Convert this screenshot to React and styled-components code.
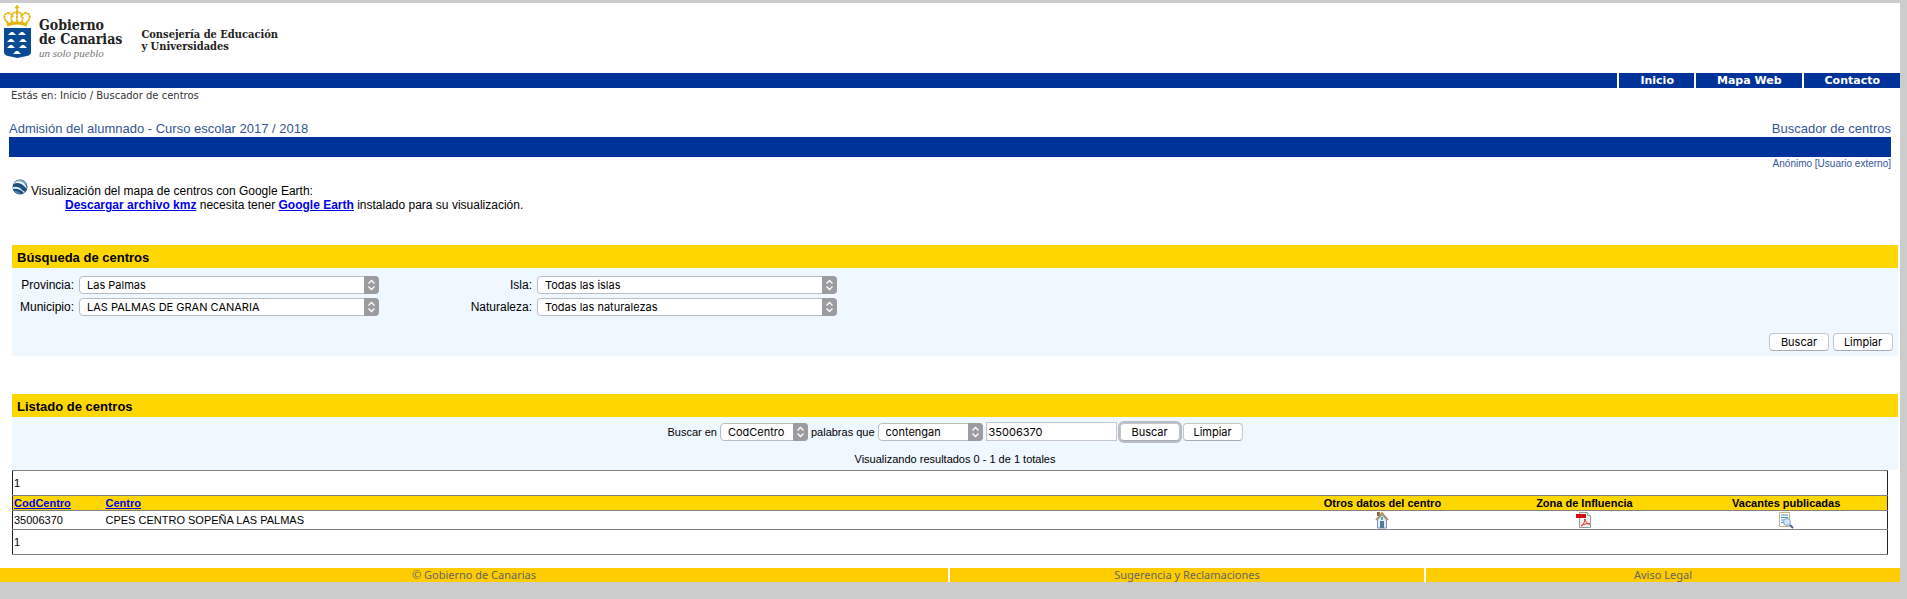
import React from 'react';
import styled, { createGlobalStyle, css } from 'styled-components';

const GlobalStyle = createGlobalStyle`
  * { box-sizing: border-box; }
  body {
    margin: 0;
    background: #cccccc;
    color: #000;
    font-family: "Liberation Sans", Arial, sans-serif;
    font-size: 12px;
    line-height: 14px;
  }
`;

const verdana = '"DejaVu Sans", Verdana, sans-serif';
const system = 'Inter, "Liberation Sans", sans-serif';

const Page = styled.div`
  margin: 3px 7px 0 0;
  background: #fff;
`;

const Masthead = styled.header`
  display: flex;
  height: 70px;
  padding: 2px 0 0 3px;
`;

const LogoLink = styled.a`
  display: flex;
  gap: 7px;
  height: 54px;
  color: #222;
  text-decoration: none;
`;

const LogoText = styled.span`
  display: flex;
  flex-direction: column;
  padding-top: 13px;
  font: bold 14px/14px "DejaVu Serif Condensed", "DejaVu Serif", serif;
`;

const Motto = styled.em`
  font: italic 11px/14px "Liberation Serif", serif;
  color: #777;
`;

const Department = styled.p`
  margin: 24px 0 0 19px;
  color: #222;
  font: bold 11px/12px "DejaVu Serif Condensed", "DejaVu Serif", serif;
`;

const TopNav = styled.nav`
  display: flex;
  justify-content: flex-end;
  height: 15px;
  background: #003399;
`;

const NavLink = styled.a`
  padding: 0 20px 0 21px;
  border-left: 2px solid #fff;
  color: #fff;
  font: bold 11px/16px ${verdana};
  text-decoration: none;
`;

const Breadcrumb = styled.nav`
  padding: 0 11px;
  color: #333;
  font: 10px/16px ${verdana};
`;

const CrumbLink = styled.a`
  color: inherit;
  text-decoration: none;
`;

const TitleBlock = styled.section`
  margin: 15px 9px 0;
  color: #335599;
`;

const TitleRow = styled.div`
  display: flex;
  justify-content: space-between;
`;

const Title = styled.h1`
  margin: 0;
  font-size: 13px;
  font-weight: normal;
  line-height: 16px;
  padding-top: 2px;
`;

const Subtitle = styled(Title).attrs({ as: 'h2' })``;

const BlueBar = styled.div`
  height: 20px;
  background: #003399;
`;

const UserInfo = styled.p`
  margin: 0;
  font-size: 10px;
  line-height: 13px;
  text-align: right;
`;

const EarthNote = styled.section`
  display: flex;
  gap: 3px;
  margin: 9px 12px 0;
`;

const EarthText = styled.p`
  margin: 5px 0 0;
`;

const EarthDetail = styled.span`
  display: block;
  padding-left: 34px;
`;

const BoldLink = styled.a`
  color: #0000ee;
  font-weight: bold;
`;

const Panel = styled.section`
  margin: ${p => p.$top}px 2px 0 12px;
  background: #eff7ff;
`;

const PanelTitle = styled.h2`
  margin: 0;
  padding: 1px 5px 0;
  background: #ffd700;
  font-size: 13px;
  line-height: 23px;
  height: 23px;
`;

const Filters = styled.div`
  display: grid;
  grid-template-columns: 62px 300px 148px 300px;
  column-gap: 5px;
  row-gap: 4px;
  padding-top: 8px;
`;

const FilterLabel = styled.label`
  text-align: right;
  line-height: 18px;
`;

const SelectWrap = styled.span`
  position: relative;
  display: inline-flex;
  width: ${p => p.$width || 'auto'};
  height: 18px;
`;

const NativeSelect = styled.select`
  appearance: none;
  width: 100%;
  height: 18px;
  padding: 0 20px 0 7px;
  border: 1px solid #b9bdc3;
  border-radius: 4px;
  background: #fff;
  color: #000;
  font: 11px/16px ${system};
`;

const Stepper = styled.svg`
  position: absolute;
  right: 0;
  top: 0;
  pointer-events: none;
`;

const Buttons = styled.div`
  display: flex;
  justify-content: flex-end;
  gap: 4px;
  padding: 17px 5px 5px;
`;

const Button = styled.button`
  width: 60px;
  height: 18px;
  padding: 0;
  border: 1px solid #c3c7cc;
  border-bottom-color: #a9adb3;
  border-radius: 4px;
  background: #fff;
  color: #000;
  font: 11px/16px ${system};
  ${p => p.$focused && css`box-shadow: 0 0 0 2px #b9bec6;`}
`;

const ListSearch = styled.form`
  display: flex;
  justify-content: center;
  align-items: center;
  gap: 3px;
  padding-top: 5px;
  font-size: 11px;
`;

const SearchInput = styled.input`
  width: 131px;
  height: 19px;
  padding: 0 2px;
  border: 1px solid #c6c6c6;
  border-radius: 0;
  background: #fff;
  color: #000;
  font: 11px/16px ${system};
`;

const ResultCount = styled.p`
  margin: 0;
  padding: 11px 0 4px;
  font-size: 11px;
  line-height: 14px;
  text-align: center;
`;

const TableWrap = styled.div`
  padding: 0 12px;
`;

const Results = styled.table`
  width: 100%;
  table-layout: fixed;
  border: 1px solid #222;
  border-top-color: #808080;
  border-bottom-color: #808080;
  border-collapse: collapse;
  font-size: 11px;
  line-height: 14px;
`;

const Row = styled.tr`
  height: ${p => p.$height}px;
  border-top: 1px solid #808080;
  ${p => p.$head && css`background: #ffd700;`}
`;

const Cell = styled.td`
  padding: 0 1px;
  text-align: ${p => p.$align || 'left'};
  svg { display: block; margin: 0 auto; }
`;

const IconLink = styled.a`
  display: block;
`;

const Footer = styled.footer`
  display: grid;
  grid-template-columns: 2fr 1fr 1fr;
  column-gap: 2px;
  margin-top: 13px;
`;

const FooterLink = styled.a`
  height: 14px;
  background: #ffcc00;
  color: #666;
  font: 11px/14px "Noto Sans", sans-serif;
  text-align: center;
  text-decoration: none;
`;

const islands = [[9, 26], [19, 26], [8, 33], [20, 33], [8, 39], [20, 39], [14, 45]];

const Shield = () => (
  <svg width="29" height="54" viewBox="0 0 29 54" aria-hidden="true">
    <g fill="none" stroke="#e3b300">
      <path d="M14 0v6M12 2.500h4" strokeWidth="1.500" />
      <path
        d="M5 18C0 14 0 9 5 8q4 0 5 4M23 18c5-4 5-9 0-10q-4 0-5 4M9 17c-2-7 1-10 5-10s7 3 5 10M14 8v9"
        strokeWidth="1.800"
        strokeDasharray="2.500 .600"
      />
      <path d="M4 20q10-4 20 0" strokeWidth="3" />
    </g>
    <path d="M1 23h27v24q0 3-4 4-5 1-9.500 2-4.500-1-9.500-2-4-1-4-4z" fill="#0a4c93" />
    <g fill="#fff">
      {islands.map(([x, y]) => (
        <path key={`${x}-${y}`} d={`M${x - 4} ${y + 4}l2-2 1-1h2l1 1 2 2z`} />
      ))}
    </g>
  </svg>
);

const Globe = () => (
  <svg width="16" height="16" viewBox="0 0 16 16" aria-hidden="true">
    <circle cx="8" cy="8" r="7.500" fill="#1d4f7e" />
    <path d="M2 4Q5 0 9 1q5 1 6 6Q10 1 2 4z" fill="#7fa9c9" />
    <path d="M1 5q7-3 11 2 2 2 3 3-1-5-5-7Q6 1 2 4z" fill="#f4f9fd" />
    <path d="M1 8q6-1 9 3l3 2-1 1Q7 9 1 10z" fill="#dcebf6" />
    <path d="M2 12q3-1 7 3-5 0-7-3z" fill="#4f86b4" />
  </svg>
);

const House = () => (
  <svg width="14" height="18" viewBox="0 0 14 18" aria-hidden="true">
    <path d="M2.500 9L7 4l4.500 5v8h-9z" fill="#e4effc" stroke="#7890b8" />
    <path d="M2 1h3v4H2z" fill="#9c6848" />
    <path d="M1 9l6-7 6 7" fill="none" stroke="#a88a5a" strokeWidth="1.500" />
    <path d="M5 10h4v7H5z" fill="#5877a8" />
    <path d="M7 6v3M7 11v5" stroke="#4c8c5c" strokeWidth="1.500" />
  </svg>
);

const Pdf = () => (
  <svg width="16" height="18" viewBox="0 0 16 18" aria-hidden="true">
    <path d="M3.500 1.500h8l3 3v12h-11z" fill="#f2f2f2" stroke="#999" />
    <path d="M11.500 1.500v3h3" fill="#fff" stroke="#aaa" />
    <path d="M0 3h10v4H0z" fill="#d40d12" />
    <path d="M5 15c2-1 4-4 4-7 1 4 3 5 5 5-3-1-6 0-9 2z" fill="none" stroke="#e0262b" />
  </svg>
);

const DocumentSearch = () => (
  <svg width="16" height="18" viewBox="0 0 16 18" aria-hidden="true">
    <path d="M1.500 1.500h10v14h-10z" fill="#fff" stroke="#c5b583" />
    <path d="M3 4h7M3 6.500h7M3 9h4M3 11.500h3" stroke="#4c94c8" />
    <circle cx="9" cy="11" r="3.500" fill="#cfe8fa" stroke="#7fa6cc" />
    <path d="M12 14l3 3" stroke="#4968a0" strokeWidth="2" />
  </svg>
);

function Select({ id, width, children }) {
  return (
    <SelectWrap $width={width}>
      <NativeSelect id={id}>
        <option>{children}</option>
      </NativeSelect>
      <Stepper width="15" height="18" viewBox="0 0 15 18" aria-hidden="true">
        <path d="M0 0h11q4 0 4 4v10q0 4-4 4H0z" fill="#9c9ba0" />
        <path d="M4.500 7.500l3-3 3 3M4.500 10.500l3 3 3-3" fill="none" stroke="#fff" strokeWidth="1.300" />
      </Stepper>
    </SelectWrap>
  );
}

const filters = [
  ['provincia', 'Provincia:', 'Las Palmas'],
  ['isla', 'Isla:', 'Todas las islas'],
  ['municipio', 'Municipio:', 'LAS PALMAS DE GRAN CANARIA'],
  ['naturaleza', 'Naturaleza:', 'Todas las naturalezas'],
];

export default function App() {
  return (
    <Page>
      <GlobalStyle />
      <Masthead>
        <LogoLink href="#">
          <Shield />
          <LogoText>
            <span>Gobierno</span>
            <span>de Canarias</span>
            <Motto>un solo pueblo</Motto>
          </LogoText>
        </LogoLink>
        <Department>Consejería de Educación<br />y Universidades</Department>
      </Masthead>
      <TopNav>
        <NavLink href="#">Inicio</NavLink>
        <NavLink href="#">Mapa Web</NavLink>
        <NavLink href="#">Contacto</NavLink>
      </TopNav>
      <Breadcrumb>
        Estás en: <CrumbLink href="#">Inicio</CrumbLink> / <CrumbLink href="#">Buscador de centros</CrumbLink>
      </Breadcrumb>

      <TitleBlock>
        <TitleRow>
          <Title>Admisión del alumnado - Curso escolar 2017 / 2018</Title>
          <Subtitle>Buscador de centros</Subtitle>
        </TitleRow>
        <BlueBar />
        <UserInfo>Anónimo [Usuario externo]</UserInfo>
      </TitleBlock>

      <EarthNote>
        <Globe />
        <EarthText>
          Visualización del mapa de centros con Google Earth:
          <EarthDetail>
            <BoldLink href="#">Descargar archivo kmz</BoldLink> necesita tener{' '}
            <BoldLink href="#">Google Earth</BoldLink> instalado para su visualización.
          </EarthDetail>
        </EarthText>
      </EarthNote>

      <Panel $top={33}>
        <PanelTitle>Búsqueda de centros</PanelTitle>
        <form>
          <Filters>
            {filters.map(([id, label, value]) => (
              <React.Fragment key={id}>
                <FilterLabel htmlFor={id}>{label}</FilterLabel>
                <Select id={id}>{value}</Select>
              </React.Fragment>
            ))}
          </Filters>
          <Buttons>
            <Button type="button">Buscar</Button>
            <Button type="button">Limpiar</Button>
          </Buttons>
        </form>
      </Panel>

      <Panel $top={38}>
        <PanelTitle>Listado de centros</PanelTitle>
        <ListSearch>
          <label htmlFor="campo">Buscar en</label>
          <Select id="campo" width="88px">CodCentro</Select>
          <label htmlFor="modo">palabras que</label>
          <Select id="modo" width="105px">contengan</Select>
          <SearchInput aria-label="Texto de búsqueda" defaultValue="35006370" />
          <Button type="button" $focused>Buscar</Button>
          <Button type="button">Limpiar</Button>
        </ListSearch>
        <ResultCount>Visualizando resultados 0 - 1 de 1 totales</ResultCount>
      </Panel>

      <TableWrap>
        <Results>
          <colgroup>
            <col style={{ width: '92px' }} />
            <col />
            <col style={{ width: '202px' }} />
            <col style={{ width: '202px' }} />
            <col style={{ width: '202px' }} />
          </colgroup>
          <tbody>
            <Row $height={25}><Cell colSpan={5}>1</Cell></Row>
            <Row $height={15} $head>
              <Cell as="th" scope="col"><BoldLink href="#">CodCentro</BoldLink></Cell>
              <Cell as="th" scope="col"><BoldLink href="#">Centro</BoldLink></Cell>
              <Cell as="th" scope="col" $align="center">Otros datos del centro</Cell>
              <Cell as="th" scope="col" $align="center">Zona de Influencia</Cell>
              <Cell as="th" scope="col" $align="center">Vacantes publicadas</Cell>
            </Row>
            <Row $height={19}>
              <Cell>35006370</Cell>
              <Cell>CPES CENTRO SOPEÑA LAS PALMAS</Cell>
              <Cell><IconLink href="#" aria-label="Otros datos del centro"><House /></IconLink></Cell>
              <Cell><IconLink href="#" aria-label="Zona de Influencia"><Pdf /></IconLink></Cell>
              <Cell><IconLink href="#" aria-label="Vacantes publicadas"><DocumentSearch /></IconLink></Cell>
            </Row>
            <Row $height={25}><Cell colSpan={5}>1</Cell></Row>
          </tbody>
        </Results>
      </TableWrap>

      <Footer>
        <FooterLink href="#">© Gobierno de Canarias</FooterLink>
        <FooterLink href="#">Sugerencia y Reclamaciones</FooterLink>
        <FooterLink href="#">Aviso Legal</FooterLink>
      </Footer>
    </Page>
  );
}
